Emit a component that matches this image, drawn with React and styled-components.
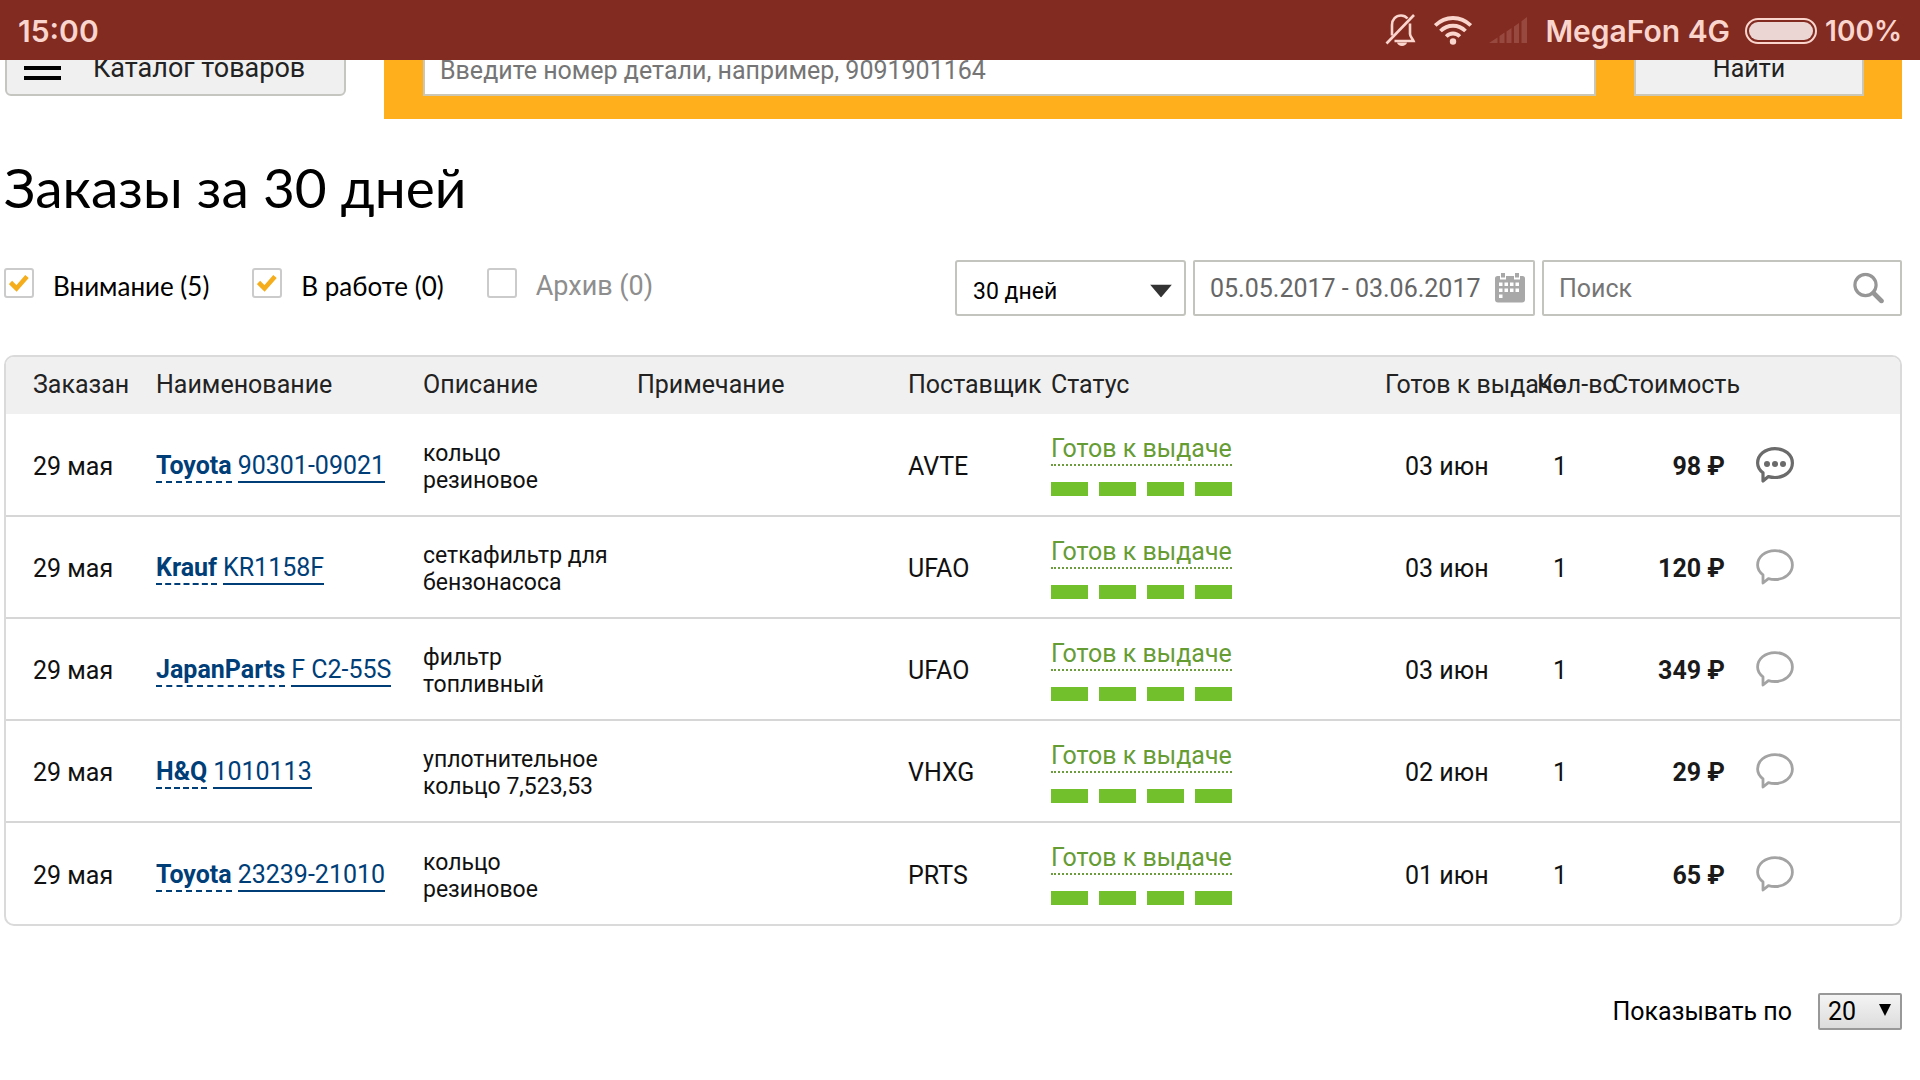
import React, { useState } from 'react';
import styled, { createGlobalStyle } from 'styled-components';

const GlobalStyle = createGlobalStyle`
  * {
    box-sizing: border-box;
  }

  body {
    margin: 0;
    background: #fff;
    color: #111;
    font-family: Roboto, 'Liberation Sans', sans-serif;
    font-size: 25px;
    line-height: 32px;
  }

  button, input, select {
    font: inherit;
    color: inherit;
  }
`;

/* ---------- system status bar ---------- */

const StatusBar = styled.div`
  display: flex;
  align-items: center;
  justify-content: space-between;
  height: 60px;
  padding: 2px 18px 0;
  background: #822b20;
  color: #fad5ce;
  font-family: Inter, Roboto, sans-serif;
  font-size: 30px;
  font-weight: 600;
`;

const Indicators = styled.div`
  display: flex;
  align-items: center;
`;

const StatusIcons = styled.span`
  display: flex;
  align-items: center;
  gap: 17px;
  padding-bottom: 2px;
`;

const Carrier = styled.span`
  margin: 0 15px 0 18px;
`;

const Battery = styled.span`
  width: 72px;
  height: 26px;
  margin-right: 8px;
  padding: 2px;
  border: 2px solid #fad5ce;
  border-radius: 13px;

  &::before {
    content: '';
    display: block;
    height: 100%;
    border-radius: 9px;
    background: #ecd6d4;
  }
`;

const Charge = styled.span`
  font-size: 28px;
`;

/* ---------- shop header, scrolled under the status bar ---------- */

const ShopHeader = styled.header`
  display: flex;
  height: 59px;
  padding: 0 18px 0 5px;
  overflow: hidden;
`;

const CatalogButton = styled.button`
  display: flex;
  align-items: center;
  align-self: flex-end;
  gap: 32px;
  width: 341px;
  height: 56px;
  margin: 0 38px 23px 0;
  padding: 0 17px;
  border: 2px solid #c6c6c0;
  border-radius: 6px;
  background: #f0f0f0;
  color: #222;
  font-size: 27px;
  white-space: nowrap;
`;

const SearchBand = styled.form`
  display: flex;
  flex: 1;
  align-items: flex-end;
  gap: 38px;
  padding: 0 38px 23px 39px;
  background: #ffaf1c;
`;

const PartInput = styled.input`
  flex: 1;
  min-width: 0;
  height: 52px;
  padding: 0 15px;
  border: 2px solid #ccc7b4;
  background: #fff;

  &::placeholder {
    color: #757575;
    opacity: 1;
  }
`;

const FindButton = styled.button`
  width: 230px;
  height: 54px;
  border: 2px solid #ccc7b4;
  background: #f0f0f0;
  color: #222;
`;

/* ---------- page ---------- */

const Page = styled.main`
  padding: 0 18px 48px 4px;
`;

const Title = styled.h1`
  margin: 32px 0 37px;
  color: #000;
  font-family: Lato, 'Noto Sans', sans-serif;
  font-size: 55px;
  font-weight: 400;
  line-height: 72px;
`;

const Toolbar = styled.div`
  display: flex;
  justify-content: space-between;
  margin-bottom: 39px;
`;

const Filters = styled.div`
  display: flex;
  gap: 43px;
  padding-top: 8px;
`;

const FilterLabel = styled.label`
  display: flex;
  gap: 19px;
  color: ${(p) => (p.$muted ? '#8e8e8e' : '#000')};
  font-family: ${(p) => (p.$muted ? 'Roboto' : 'Lato')}, sans-serif;
  font-size: ${(p) => (p.$muted ? 27 : 26)}px;
  line-height: 36px;
  white-space: nowrap;
`;

const CheckWrap = styled.span`
  position: relative;
  width: 30px;
  height: 30px;

  svg {
    position: absolute;
    top: 6px;
    left: 5px;
    pointer-events: none;
  }
`;

const Checkbox = styled.input`
  appearance: none;
  display: block;
  width: 30px;
  height: 30px;
  margin: 0;
  border: 2px solid #cbcbcb;
  border-radius: 3px;
  background: #fff;
`;

const Controls = styled.div`
  display: flex;
  gap: 7px;
`;

const Field = styled.div`
  position: relative;
  width: ${(p) => p.$width}px;

  svg {
    position: absolute;
    top: 50%;
    right: ${(p) => p.$inset}px;
    transform: translateY(-50%);
    pointer-events: none;
  }
`;

const TextInput = styled.input`
  width: 100%;
  height: 56px;
  padding: 0 15px;
  border: 2px solid #c4c4be;
  border-radius: 2px;
  background: #fff;
  color: #666;

  &::placeholder {
    color: #757575;
    opacity: 1;
  }
`;

const PeriodField = styled(Field)`
  svg {
    top: 31px;
  }
`;

const PeriodSelect = styled.select`
  appearance: none;
  width: 100%;
  height: 56px;
  padding: 8px 16px 0;
  border: 2px solid #c4c4be;
  border-radius: 3px;
  background: #fff;
  color: #000;
  font-size: 23px;
`;

/* ---------- orders table ---------- */

const TableFrame = styled.div`
  border: 2px solid #dadada;
  border-radius: 10px;
  overflow: hidden;
`;

const Table = styled.table`
  width: 100%;
  table-layout: fixed;
  border-collapse: collapse;
`;

const Th = styled.th`
  height: 57px;
  padding: 0 0 2px ${(p) => p.$indent || 0}px;
  background: #f0f0f0;
  color: #222;
  font-weight: 400;
  text-align: left;
  white-space: nowrap;
`;

const Row = styled.tr`
  & + & {
    border-top: 2px solid #d6d6d6;
  }
`;

const Td = styled.td`
  height: 102px;
  padding: ${(p) => (p.$tight ? 0 : 4)}px 0 0 ${(p) => p.$indent || 0}px;
  vertical-align: middle;
`;

const PriceTd = styled(Td)`
  padding-right: 31px;
  color: #1a1a1a;
  font-weight: 700;
  text-align: right;
`;

const Description = styled.div`
  width: 190px;
  font-size: 23px;
  line-height: 27px;
`;

const PartName = styled.div`
  display: flex;
  gap: 6px;
  white-space: nowrap;
`;

const BrandLink = styled.a`
  border-bottom: 2px dashed #003e78;
  color: #003e78;
  font-weight: 700;
  line-height: 30px;
  text-decoration: none;
`;

const NumberLink = styled(BrandLink)`
  border-bottom-style: solid;
  font-weight: 400;
`;

const StatusLink = styled.a`
  display: inline-block;
  margin-bottom: 16px;
  border-bottom: 2px dotted #6d9c3c;
  color: #669c34;
  line-height: 30px;
  text-decoration: none;
`;

const Steps = styled.div`
  display: flex;
  gap: 11px;
`;

const Step = styled.span`
  width: 37px;
  height: 14px;
  background: #72c02c;
`;

const CommentButton = styled.button`
  display: block;
  padding: 0;
  border: 0;
  background: none;

  svg {
    display: block;
  }
`;

const Pager = styled.div`
  display: flex;
  align-items: center;
  justify-content: flex-end;
  gap: 26px;
  margin-top: 67px;
  color: #000;
`;

const PageSizeField = styled(Field)`
  svg {
    top: 17px;
  }
`;

const PageSize = styled.select`
  appearance: none;
  display: block;
  width: 100%;
  height: 37px;
  padding: 0 8px;
  border: 2px solid #989898;
  border-radius: 2px;
  background: linear-gradient(#f4f4f4, #dcdcdc);
  color: #000;
`;

/* ---------- icons ---------- */

const BellOff = () => (
  <svg width="32" height="34" viewBox="0 0 32 34" fill="none" stroke="#fad5ce" strokeWidth="2.6">
    <path d="M25 10.500v10.500c0 2.500 2.500 4.500 3.500 7H9.500" />
    <path d="M7 22.500v-10.500c0-5.500 3.800-9.500 9-9.500 2.800 0 5 1.200 6.500 3" />
    <path d="M1.500 30.500 29 2" />
    <path d="M12 29.500h10c-.5 2.200-2.600 3.500-5 3.500s-4.500-1.300-5-3.500z" fill="#fad5ce" stroke="none" />
  </svg>
);

const Wifi = () => (
  <svg width="38" height="29" viewBox="0 0 38 29" fill="none" stroke="#fad5ce" strokeWidth="3.800">
    <path d="M1.200 9.500C11.500-.500 26.500-.500 36.800 9.500" />
    <path d="M6.500 15c7-7 18-7 25 0" />
    <path d="M12.200 20.500c4-4 9.600-4 13.600 0" />
    <circle cx="19" cy="25.500" r="3.200" fill="#fad5ce" stroke="none" />
  </svg>
);

const Signal = () => (
  <svg width="38" height="26" viewBox="0 0 38 26" fill="#98493f">
    <path d="M0 26l8.500-5.500V26zM10.500 19l5-3.500V26h-5zM17.500 14.500l5-3.500v15h-5zM25 9.400l5-3.500V26h-5zM32.500 4.200 38 0v26h-5.500z" />
  </svg>
);

const Burger = () => (
  <svg width="37" height="24" viewBox="0 0 37 24" fill="#000">
    <path d="M0 0h37v4H0zM0 10h37v4H0zM0 20h37v4H0z" />
  </svg>
);

const Check = () => (
  <svg width="20" height="18" viewBox="0 0 20 18" fill="none" stroke="#f5ad1b" strokeWidth="4.600">
    <path d="M1.500 8.500 7.500 14.500 18 2.500" />
  </svg>
);

const Caret = ({ width, height, color }) => (
  <svg width={width} height={height} viewBox="0 0 10 10" preserveAspectRatio="none" fill={color}>
    <path d="M0 0h10L5 10z" />
  </svg>
);

const Calendar = () => (
  <svg width="30" height="30" viewBox="0 0 30 30">
    <path
      fill="#a8a8a8"
      d="M2.500 3H5v3.500h6V3h8v3.500h6V3h2.500A2.500 2.500 0 0 1 30 5.500v21a3 3 0 0 1-3 3H3a3 3 0 0 1-3-3v-21A2.500 2.500 0 0 1 2.500 3zM6 0h4v4.500H6zM20 0h4v4.500h-4z"
    />
    <path
      fill="#fff"
      d="M9.500 9.500H13V13H9.500zM15 9.500h3.500V13H15zM20.500 9.500H24V13h-3.500zM4 9.500h3.500V13H4zM4 15.500h3.500V19H4zM9.500 15.500H13V19H9.500zM15 15.500h3.500V19H15zM20.500 15.500H24V19h-3.500zM4 21.500h3.500V25H4z"
    />
  </svg>
);

const Magnifier = () => (
  <svg width="31" height="31" viewBox="0 0 31 31" fill="none" stroke="#969696">
    <circle cx="12.500" cy="12.500" r="10.600" strokeWidth="3.200" />
    <path d="M20.500 20.500 28.500 28.500" strokeWidth="4.600" strokeLinecap="round" />
  </svg>
);

const Bubble = ({ filled }) => (
  <svg width="38" height="36" viewBox="0 0 38 36" fill="none" stroke={filled ? '#6b6b6b' : '#a3a3a3'}>
    <path
      strokeWidth={filled ? 3.2 : 2.8}
      strokeLinejoin="round"
      d="M7 34V25.800C3.600 23.200 1.600 19.900 1.600 16 1.600 8 9 1.600 19 1.600S36.400 8 36.400 16 29 30.500 19 30.500c-2.400 0-4.600-.300-6.600-.900z"
    />
    {filled && (
      <g fill="#6b6b6b" stroke="none">
        <circle cx="11" cy="17" r="3" />
        <circle cx="19" cy="17" r="3" />
        <circle cx="27" cy="17" r="3" />
      </g>
    )}
  </svg>
);

/* ---------- data ---------- */

const FILTERS = [
  { id: 'attention', label: 'Внимание (5)', on: true },
  { id: 'progress', label: 'В работе (0)', on: true },
  { id: 'archive', label: 'Архив (0)', on: false },
];

const COLUMNS = [
  { title: 'Заказан', width: 150, indent: 27 },
  { title: 'Наименование', width: 267 },
  { title: 'Описание', width: 214 },
  { title: 'Примечание', width: 271 },
  { title: 'Поставщик', width: 143 },
  { title: 'Статус', width: 334 },
  { title: 'Готов к выдаче', width: 152 },
  { title: 'Кол-во', width: 75 },
  { title: 'Стоимость', width: 144 },
];

const ORDERS = [
  { brand: 'Toyota', number: '90301-09021', text: 'кольцо резиновое', supplier: 'AVTE', ready: '03 июн', price: 98, commented: true },
  { brand: 'Krauf', number: 'KR1158F', text: 'сеткафильтр для бензонасоса', supplier: 'UFAO', ready: '03 июн', price: 120 },
  { brand: 'JapanParts', number: 'F C2-55S', text: 'фильтр топливный', supplier: 'UFAO', ready: '03 июн', price: 349 },
  { brand: 'H&Q', number: '1010113', text: 'уплотнительное кольцо 7,523,53', supplier: 'VHXG', ready: '02 июн', price: 29 },
  { brand: 'Toyota', number: '23239-21010', text: 'кольцо резиновое', supplier: 'PRTS', ready: '01 июн', price: 65 },
];

const Filter = ({ id, label, on }) => {
  const [checked, setChecked] = useState(on);

  return (
    <FilterLabel htmlFor={id} $muted={!checked}>
      <CheckWrap>
        <Checkbox id={id} type="checkbox" checked={checked} onChange={(e) => setChecked(e.target.checked)} />
        {checked && <Check />}
      </CheckWrap>
      {label}
    </FilterLabel>
  );
};

const OrderRow = ({ order }) => (
  <Row>
    <Td $indent={27}>29 мая</Td>
    <Td>
      <PartName>
        <BrandLink href="#brand">{order.brand}</BrandLink>
        <NumberLink href="#part">{order.number}</NumberLink>
      </PartName>
    </Td>
    <Td>
      <Description>{order.text}</Description>
    </Td>
    <Td />
    <Td>{order.supplier}</Td>
    <Td $tight>
      <StatusLink href="#status">Готов к выдаче</StatusLink>
      <Steps>
        <Step />
        <Step />
        <Step />
        <Step />
      </Steps>
    </Td>
    <Td $indent={20}>{order.ready}</Td>
    <Td $indent={16}>1</Td>
    <PriceTd>{order.price} ₽</PriceTd>
    <Td $tight>
      <CommentButton type="button" aria-label="Комментарий">
        <Bubble filled={order.commented} />
      </CommentButton>
    </Td>
  </Row>
);

const App = () => (
  <>
    <GlobalStyle />
    <StatusBar>
      <span>15:00</span>
      <Indicators>
        <StatusIcons>
          <BellOff />
          <Wifi />
          <Signal />
        </StatusIcons>
        <Carrier>MegaFon 4G</Carrier>
        <Battery />
        <Charge>100%</Charge>
      </Indicators>
    </StatusBar>

    <ShopHeader>
      <CatalogButton type="button">
        <Burger />
        Каталог товаров
      </CatalogButton>
      <SearchBand onSubmit={(e) => e.preventDefault()}>
        <PartInput aria-label="Номер детали" placeholder="Введите номер детали, например, 9091901164" />
        <FindButton type="submit">Найти</FindButton>
      </SearchBand>
    </ShopHeader>

    <Page>
      <Title>Заказы за 30 дней</Title>

      <Toolbar>
        <Filters>
          {FILTERS.map((f) => (
            <Filter key={f.id} {...f} />
          ))}
        </Filters>
        <Controls>
          <PeriodField $width={231} $inset={14}>
            <PeriodSelect aria-label="Период" defaultValue="30">
              <option value="30">30 дней</option>
            </PeriodSelect>
            <Caret width={22} height={13} color="#333" />
          </PeriodField>
          <Field $width={342} $inset={10}>
            <TextInput aria-label="Даты" defaultValue="05.05.2017 - 03.06.2017" />
            <Calendar />
          </Field>
          <Field $width={360} $inset={18}>
            <TextInput aria-label="Поиск" placeholder="Поиск" />
            <Magnifier />
          </Field>
        </Controls>
      </Toolbar>

      <TableFrame>
        <Table>
          <colgroup>
            {COLUMNS.map((c) => (
              <col key={c.title} width={c.width} />
            ))}
            <col />
          </colgroup>
          <thead>
            <tr>
              {COLUMNS.map((c) => (
                <Th key={c.title} $indent={c.indent}>{c.title}</Th>
              ))}
              <Th />
            </tr>
          </thead>
          <tbody>
            {ORDERS.map((order) => (
              <OrderRow key={order.brand + order.number} order={order} />
            ))}
          </tbody>
        </Table>
      </TableFrame>

      <Pager>
        <label htmlFor="page-size">Показывать по</label>
        <PageSizeField $width={84} $inset={11}>
          <PageSize id="page-size" defaultValue="20">
            <option value="20">20</option>
          </PageSize>
          <Caret width={12} height={12} color="#000" />
        </PageSizeField>
      </Pager>
    </Page>
  </>
);

export default App;
